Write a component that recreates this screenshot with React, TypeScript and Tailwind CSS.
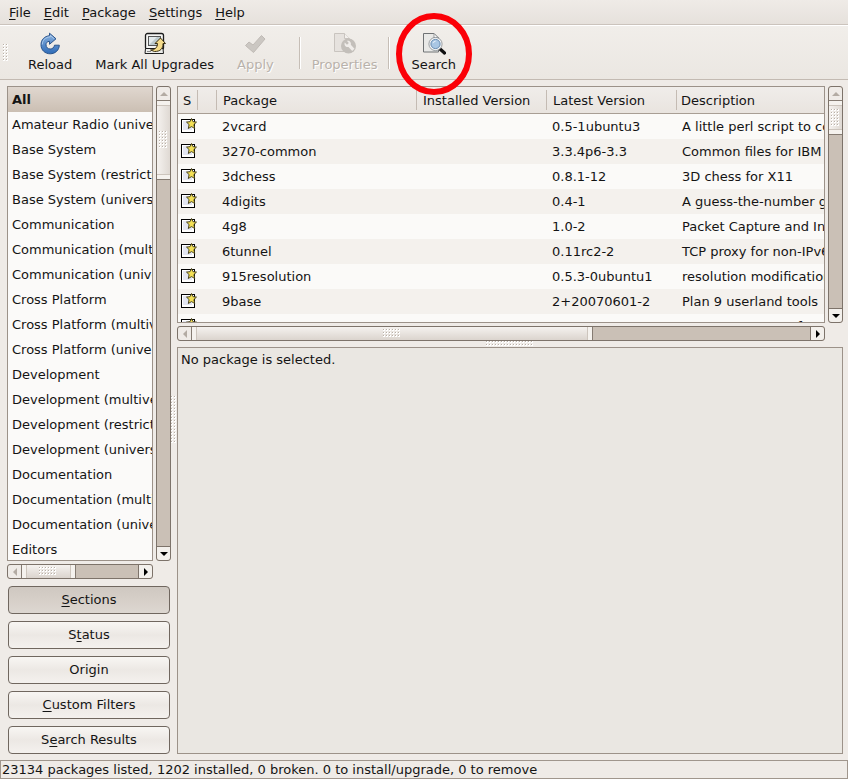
import { useState } from 'react';
import type { ReactNode } from 'react';

const sections = [
  'All',
  'Amateur Radio (universe)',
  'Base System',
  'Base System (restricted)',
  'Base System (universe)',
  'Communication',
  'Communication (multiverse)',
  'Communication (universe)',
  'Cross Platform',
  'Cross Platform (multiverse)',
  'Cross Platform (universe)',
  'Development',
  'Development (multiverse)',
  'Development (restricted)',
  'Development (universe)',
  'Documentation',
  'Documentation (multiverse)',
  'Documentation (universe)',
  'Editors',
];

const packages = [
  { name: '2vcard', latest: '0.5-1ubuntu3', description: 'A little perl script to convert an addressbook' },
  { name: '3270-common', latest: '3.3.4p6-3.3', description: 'Common files for IBM 3270 emulators' },
  { name: '3dchess', latest: '0.8.1-12', description: '3D chess for X11' },
  { name: '4digits', latest: '0.4-1', description: 'A guess-the-number game' },
  { name: '4g8', latest: '1.0-2', description: 'Packet Capture and Interception' },
  { name: '6tunnel', latest: '0.11rc2-2', description: 'TCP proxy for non-IPv6 applications' },
  { name: '915resolution', latest: '0.5.3-0ubuntu1', description: 'resolution modification tool' },
  { name: '9base', latest: '2+20070601-2', description: 'Plan 9 userland tools' },
  { name: '9menu', latest: '1.8-1', description: 'Creates X menus from the shell' },
];

const menus = ['File', 'Edit', 'Package', 'Settings', 'Help'];

const filters = [
  { label: 'Sections', key: 0 },
  { label: 'Status', key: 1 },
  { label: 'Origin', key: -1 },
  { label: 'Custom Filters', key: 0 },
  { label: 'Search Results', key: 1 },
];

// Label with its keyboard mnemonic underlined
function Mnemonic({ text, index }: { text: string; index: number }) {
  if (index < 0) return <>{text}</>;
  return (
    <>
      {text.slice(0, index)}
      <span className="underline underline-offset-2">{text[index]}</span>
      {text.slice(index + 1)}
    </>
  );
}

function Grip({ cols, rows }: { cols: number; rows: number }) {
  const dots = [];
  for (let y = 0; y < rows; y++) {
    for (let x = 0; x < cols; x++) {
      dots.push(
        <g key={`${x}-${y}`}>
          <rect x={x * 3} y={y * 3} width="2" height="2" fill="#ffffff" />
          <rect x={x * 3} y={y * 3} width="1" height="1" fill="#b9b0a7" />
        </g>
      );
    }
  }
  return (
    <svg width={cols * 3} height={rows * 3} className="shrink-0" aria-hidden="true">
      {dots}
    </svg>
  );
}

function Arrow({ points, dim }: { points: string; dim?: boolean }) {
  return (
    <svg width="8" height="8" viewBox="0 0 8 8" aria-hidden="true">
      <polygon points={points} fill={dim ? '#b3aba3' : '#000000'} />
    </svg>
  );
}

function VScroll({ thumb }: { thumb: string }) {
  return (
    <div className="flex w-[15px] shrink-0 flex-col rounded-[3px] border border-[#7d736a] bg-[#cac0b6]">
      <button aria-label="Scroll up" className="flex h-[13px] shrink-0 items-center justify-center rounded-t-[3px] bg-[#efebe7]">
        <Arrow points="0,6 8,6 4,2" dim />
      </button>
      <div className="min-h-0 flex-1">
        <div className={`flex flex-col items-center justify-between border-y border-[#857b72] bg-linear-to-r from-[#f5f2ef] to-[#dfd9d3] ${thumb}`}>
          <div className="h-[5px] w-full border-b border-[#cdc5bd] bg-[#f5f2ee]" />
          <Grip cols={3} rows={6} />
          <div className="h-[5px] w-full border-t border-[#cdc5bd] bg-[#f5f2ee]" />
        </div>
      </div>
      <button aria-label="Scroll down" className="flex h-[14px] shrink-0 items-center justify-center rounded-b-[3px] border-t border-[#7d736a] bg-[#f3f0ec]">
        <Arrow points="0,2 8,2 4,6" />
      </button>
    </div>
  );
}

function HScroll({ thumb }: { thumb: string }) {
  return (
    <div className="flex h-[15px] shrink-0 rounded-[3px] border border-[#7d736a] bg-[#cac0b6]">
      <button aria-label="Scroll left" className="flex w-[13px] shrink-0 items-center justify-center rounded-l-[3px] bg-[#efebe7]">
        <Arrow points="6,0 6,8 2,4" dim />
      </button>
      <div className="flex min-w-0 flex-1">
        <div className={`flex items-center justify-between border-x border-[#857b72] bg-linear-to-b from-[#f5f2ef] to-[#dbd4ce] ${thumb}`}>
          <div className="h-full w-[5px] border-r border-[#cdc5bd] bg-[#f5f2ee]" />
          <Grip cols={6} rows={3} />
          <div className="h-full w-[5px] border-l border-[#cdc5bd] bg-[#f5f2ee]" />
        </div>
      </div>
      <button aria-label="Scroll right" className="flex w-[14px] shrink-0 items-center justify-center rounded-r-[3px] border-l border-[#7d736a] bg-[#f3f0ec]">
        <Arrow points="2,0 2,8 6,4" />
      </button>
    </div>
  );
}

function ReloadIcon() {
  return (
    <svg width="24" height="24" viewBox="0 0 24 24" aria-hidden="true">
      <defs>
        <linearGradient id="reload" x1="0" y1="0" x2="0" y2="1">
          <stop offset="0" stopColor="#8db4e0" />
          <stop offset="1" stopColor="#2f6cb8" />
        </linearGradient>
      </defs>
      <path
        d="M11.500 3.700V1.200L18 6.800l-6.500 5.500V9.300C9 9.300 8 11 8 12.800c0 2.500 1.800 4.200 4.200 4.200 2.300 0 3.900-1.500 4.300-3.800h4.800c-.2 5-4 8.600-9.100 8.600C7 21.800 3 18.100 3 12.800 3 7.700 6.500 4.200 11.500 3.700z"
        fill="url(#reload)"
        stroke="#2a548c"
        strokeWidth="1"
        strokeLinejoin="round"
      />
      <path d="M4.300 12.500C4.500 8 7.500 5.200 12.400 4.800V3.500l3.500 3.100" fill="none" stroke="#b9d2ee" strokeWidth="0.8" />
    </svg>
  );
}

function UpgradeIcon() {
  return (
    <svg width="24" height="24" viewBox="0 0 24 24" aria-hidden="true">
      <rect x="2.500" y="1.500" width="18" height="16" rx="2" fill="#f6f6f4" stroke="#1c1c1c" strokeWidth="1.300" />
      <rect x="5.500" y="4.500" width="12" height="9" fill="#bcc9cd" stroke="#555" />
      <path d="M6 13V5h8z" fill="#e3eaec" />
      <path d="M2.500 16.500h17.500l.5 5h-18.500z" fill="#ededea" stroke="#1c1c1c" strokeLinejoin="round" />
      <path d="M4 19.500h4" stroke="#888" />
      <path
        d="M17.500 6l5 5.500h-2.500c.2 5-2.500 8-8.500 8l-4-1.500c4.500-.2 7-2.500 7-6.500h-2.500z"
        fill="#f5dc8b"
        stroke="#3a2f10"
        strokeWidth="1"
        strokeLinejoin="round"
      />
    </svg>
  );
}

function ApplyIcon() {
  return (
    <svg width="24" height="24" viewBox="0 0 24 24" aria-hidden="true">
      <path d="M2.500 13.500l3.500-3.500 4 3 8.500-9.500 3.500 3.500L10.500 20.500z" fill="#cbc7c2" stroke="#bfbab5" strokeLinejoin="round" />
    </svg>
  );
}

function PropertiesIcon() {
  return (
    <svg width="24" height="24" viewBox="0 0 24 24" aria-hidden="true">
      <path d="M1.500 1.500h10l5 5v13h-15z" fill="#e6e2de" stroke="#c9c4bf" />
      <path d="M11.500 1.500v5h5" fill="#f3f0ed" stroke="#c9c4bf" />
      <circle cx="15.500" cy="14" r="7.500" fill="#c3bfba" />
      <path d="M11.800 10.500l2.200 2.200 1.800-1.700-2-2.200c2.600-.8 4.800 1.500 4 4l3.700 3.900-2.300 2.200-3.700-3.900c-2.700.7-4.700-2-3.700-4.500z" fill="#f0edea" />
    </svg>
  );
}

function SearchIcon() {
  return (
    <svg width="24" height="24" viewBox="0 0 24 24" aria-hidden="true">
      <path d="M1.500 1.500h10.500l4.500 4.500v14h-15z" fill="#e9e9e7" stroke="#6f7274" />
      <path d="M12 1.500V6h4.500z" fill="#ffffff" stroke="#85888a" strokeWidth="0.800" />
      <path d="M17.500 16.500l5 4.500" stroke="#101010" strokeWidth="3.200" strokeLinecap="round" />
      <circle cx="13.500" cy="12" r="5.600" fill="#a9c6e3" stroke="#f2f4f5" strokeWidth="2" />
      <circle cx="13.500" cy="12" r="6.600" fill="none" stroke="#777d82" strokeWidth="0.700" />
      <circle cx="13.500" cy="12" r="4.600" fill="none" stroke="#5c82aa" strokeWidth="0.900" />
      <path d="M10.500 11.500a3.200 3.200 0 0 1 4-2.700z" fill="#e8f1fa" />
    </svg>
  );
}

function StatusIcon() {
  return (
    <svg width="16" height="18" viewBox="0 0 16 18" className="block" aria-hidden="true">
      <rect x="0.500" y="1.500" width="13" height="13" fill="#ffffff" stroke="#000000" />
      <rect x="2" y="3" width="9" height="9" fill="#e3e6f2" />
      <path
        d="M10.500 .5l1.500 3.200 3.500.4-2.600 2.500.8 3.900-3.200-1.900-3.200 1.900.8-3.900-2.600-2.500 3.500-.4z"
        fill="#f3df55"
        stroke="#3a3514"
        strokeWidth="0.900"
        strokeLinejoin="round"
      />
    </svg>
  );
}

function ToolButton({ icon, label, disabled }: { icon: ReactNode; label: string; disabled?: boolean }) {
  return (
    <button
      disabled={disabled}
      className={`flex flex-col items-center gap-px px-[11px] ${disabled ? 'text-[#b9b2ab] [text-shadow:1px_1px_0_#ffffff]' : ''}`}
    >
      {icon}
      <span className="leading-4">{label}</span>
    </button>
  );
}

function ToolSeparator() {
  return <div className="h-8 w-0.5 border-l border-[#c6beb6] bg-white" />;
}

export default function App() {
  const [section, setSection] = useState('All');
  const [filter, setFilter] = useState('Sections');

  return (
    <div className="flex h-screen flex-col overflow-hidden bg-[#efebe7] font-['DejaVu_Sans',sans-serif] text-[13px] text-[#141414]">
      <nav className="flex h-[25px] shrink-0 items-center gap-px border-b border-[#cbc3bc] bg-linear-to-b from-[#efebe7] to-[#e6e1dc] pt-0.5 pl-[3px]">
        {menus.map((menu) => (
          <button key={menu} className="px-1.5">
            <Mnemonic text={menu} index={0} />
          </button>
        ))}
      </nav>

      <div className="flex h-[55px] shrink-0 items-center border-y border-t-white border-b-[#c3bab2] bg-linear-to-b from-[#f1eeea] to-[#ebe7e2] pl-[3px]">
        <Grip cols={2} rows={6} />
        <div className="flex items-center gap-px pr-3.5 pl-2">
          <ToolButton icon={<ReloadIcon />} label="Reload" />
          <ToolButton icon={<UpgradeIcon />} label="Mark All Upgrades" />
          <ToolButton icon={<ApplyIcon />} label="Apply" disabled />
        </div>
        <ToolSeparator />
        <ToolButton icon={<PropertiesIcon />} label="Properties" disabled />
        <ToolSeparator />
        <div className="relative ml-2.5">
          <ToolButton icon={<SearchIcon />} label="Search" />
          {/* highlight ring drawn over the button */}
          <svg width="78" height="84" className="pointer-events-none absolute top-1/2 left-1/2 z-10 -translate-x-1/2 -translate-y-1/2" aria-hidden="true">
            <ellipse cx="39" cy="43" rx="35" ry="38" fill="none" stroke="#fb0007" strokeWidth="6" />
          </svg>
        </div>
      </div>

      <main className="flex min-h-0 flex-1 pt-1.5 pr-[5px] pb-1.5 pl-[7px]">
        <aside className="flex w-[164px] shrink-0 flex-col">
          <div className="flex min-h-0 flex-1 gap-[3px]">
            <ul className="min-h-0 min-w-0 flex-1 overflow-hidden border border-[#9c9289] bg-[#fbfaf9]">
              {sections.map((name) => (
                <li key={name}>
                  <button
                    onClick={() => setSection(name)}
                    className={`block h-[25px] w-full overflow-hidden px-1 text-left whitespace-nowrap ${
                      section === name ? 'bg-linear-to-b from-[#e0d7cf] to-[#cbbfb3] font-bold' : ''
                    }`}
                  >
                    {name}
                  </button>
                </li>
              ))}
            </ul>
            <VScroll thumb="h-[18%]" />
          </div>
          <div className="mt-[3px] mr-[18px] flex flex-col">
            <HScroll thumb="w-[47%]" />
          </div>
          <div className="mt-[7px] flex flex-col gap-[7px] px-px">
            {filters.map((item) => (
              <button
                key={item.label}
                onClick={() => setFilter(item.label)}
                className={`h-7 rounded-[4px] border border-[#70675f] ${
                  filter === item.label
                    ? 'bg-linear-to-b from-[#cfc8c1] via-[#d6cfc8] to-[#ddd7d1]'
                    : 'bg-linear-to-b from-[#f8f6f3] via-[#ece8e4] to-[#f4f1ee]'
                }`}
              >
                <Mnemonic text={item.label} index={item.key} />
              </button>
            ))}
          </div>
        </aside>

        <div className="flex w-1.5 shrink-0 items-center justify-center">
          <Grip cols={2} rows={16} />
        </div>

        <section className="flex min-w-0 flex-1 flex-col">
          <div className="flex h-[237px] shrink-0 gap-[3px]">
            <div className="min-w-0 flex-1 overflow-hidden border border-[#9c9289] bg-[#fbfaf8]">
              <table className="w-full table-fixed border-separate border-spacing-0 whitespace-nowrap">
                <thead>
                  <tr className="h-[27px] text-left [&>th]:border-b [&>th]:border-[#a89e94] [&>th]:bg-linear-to-b [&>th]:from-[#f0edea] [&>th]:to-[#e9e4df] [&>th]:p-0 [&>th]:font-normal [&_div]:h-5 [&_div]:leading-[22px]">
                    <th className="w-5">
                      <div className="border-r border-[#c4bbb3] pl-[5px]">S</div>
                    </th>
                    <th className="w-[19px]">
                      <div className="border-r border-[#c4bbb3]" />
                    </th>
                    <th className="w-[200px]">
                      <div className="border-r border-[#c4bbb3] pl-1.5">Package</div>
                    </th>
                    <th className="w-[130px]">
                      <div className="border-r border-[#c4bbb3] pl-1.5">Installed Version</div>
                    </th>
                    <th className="w-[130px]">
                      <div className="border-r border-[#c4bbb3] pl-1.5">Latest Version</div>
                    </th>
                    <th>
                      <div className="pl-1">Description</div>
                    </th>
                  </tr>
                </thead>
                <tbody>
                  {packages.map((pkg) => (
                    <tr key={pkg.name} className="h-[25px] even:bg-[#f4f1ed] [&>td]:overflow-hidden [&>td]:py-0 [&>td]:pr-0">
                      <td className="pl-[3px]">
                        <StatusIcon />
                      </td>
                      <td className="pl-0" />
                      <td className="pl-[5px]">{pkg.name}</td>
                      <td className="pl-[5px]" />
                      <td className="pl-[5px]">{pkg.latest}</td>
                      <td className="pl-[5px]">{pkg.description}</td>
                    </tr>
                  ))}
                </tbody>
              </table>
            </div>
            <VScroll thumb="h-[17%]" />
          </div>
          <div className="mt-[3px] mr-[18px] flex flex-col">
            <HScroll thumb="w-[65%]" />
          </div>
          <div className="flex h-1.5 shrink-0 items-center justify-center">
            <Grip cols={16} rows={2} />
          </div>
          <div className="min-h-0 flex-1 border border-[#9c9289] bg-[#eae7e2] px-[3px] py-0.5">No package is selected.</div>
        </section>
      </main>

      <footer className="flex h-[19px] shrink-0 items-center border border-[#a0968d] pl-px whitespace-nowrap">
        23134 packages listed, 1202 installed, 0 broken. 0 to install/upgrade, 0 to remove
      </footer>
    </div>
  );
}
